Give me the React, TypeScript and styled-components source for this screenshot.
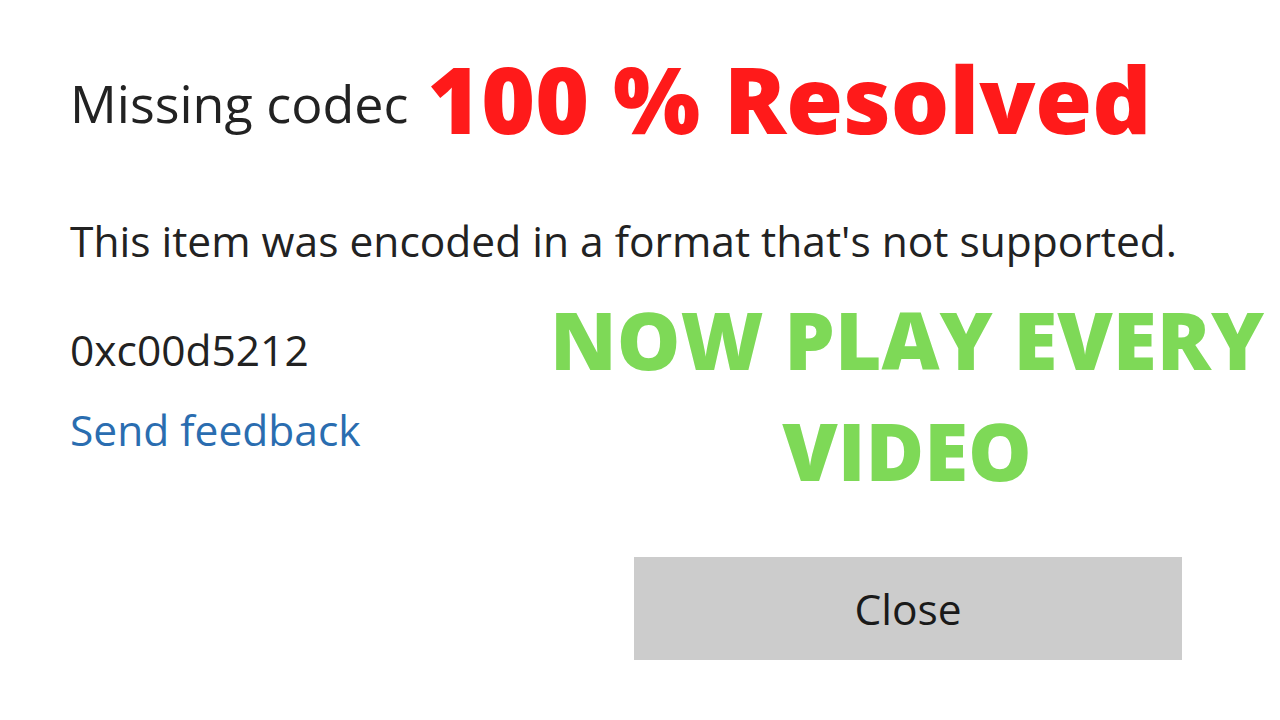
import styled, { createGlobalStyle } from "styled-components";

const GlobalStyle = createGlobalStyle`
    html, body {
        margin: 0;
        padding: 0;
        background: #ffffff;
    }
`;

const Page = styled.div`
    width: 1280px;
    height: 720px;
    background: #ffffff;
    box-sizing: border-box;
    padding: 53px 0 0 70px;
    display: flex;
    flex-direction: column;
    font-family: "Open Sans", "Noto Sans", sans-serif;
    overflow: hidden;
`;

const TitleRow = styled.div`
    display: flex;
    align-items: flex-start;
    gap: 19px;
`;

const DialogTitle = styled.h1`
    margin: 24px 0 0;
    font-size: 52px;
    font-weight: 400;
    color: #222222;
    line-height: 1;
`;

// the big youtube-thumbnail style text on top of the dialog
const Banner = styled.span<{ $color: string; $size: number }>`
    font-family: "Open Sans", sans-serif;
    font-weight: 800;
    font-size: ${(p) => p.$size}px;
    color: ${(p) => p.$color};
    line-height: 1;
    white-space: nowrap;
`;

const Message = styled.p`
    margin: 70px 0 0;
    font-size: 42.5px;
    color: #222222;
    line-height: 51px;
    white-space: nowrap;
`;

const InfoRow = styled.div`
    display: flex;
    margin-top: 33px;
`;

const InfoColumn = styled.div`
    display: flex;
    flex-direction: column;
    gap: 29px;
    width: 477px;
    padding-top: 25px;
`;

const Code = styled.div`
    font-size: 42.5px;
    color: #222222;
    line-height: 51px;
`;

const FeedbackLink = styled.a`
    font-size: 42.5px;
    color: #2a6db0;
    text-decoration: none;
    line-height: 51px;
`;

const Promo = styled.div`
    width: 720px;
    text-align: center;
    display: flex;
    flex-direction: column;
    gap: 31px;
`;

const ButtonRow = styled.div`
    display: flex;
    justify-content: flex-end;
    padding-right: 98px;
    margin-top: 67px;
`;

const CloseButton = styled.button`
    width: 548px;
    height: 103px;
    padding: 0;
    border: none;
    background: #cccccc;
    font-family: "Open Sans", "Noto Sans", sans-serif;
    font-size: 42.5px;
    color: #1a1a1a;
    cursor: pointer;
`;

export default function App() {
    return (
        <>
            <GlobalStyle />
            <Page>
                <TitleRow>
                    <DialogTitle>Missing codec</DialogTitle>
                    <Banner $color="#ff1a1a" $size={92}>100 % Resolved</Banner>
                </TitleRow>
                <Message>This item was encoded in a format that's not supported.</Message>
                <InfoRow>
                    <InfoColumn>
                        <Code>0xc00d5212</Code>
                        <FeedbackLink href="#">Send feedback</FeedbackLink>
                    </InfoColumn>
                    <Promo>
                        <Banner $color="#7ed957" $size={80}>NOW PLAY EVERY</Banner>
                        <Banner $color="#7ed957" $size={80}>VIDEO</Banner>
                    </Promo>
                </InfoRow>
                <ButtonRow>
                    <CloseButton>Close</CloseButton>
                </ButtonRow>
            </Page>
        </>
    );
}
